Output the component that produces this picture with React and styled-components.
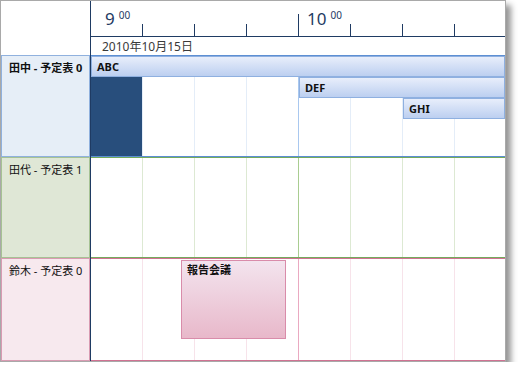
import React from 'react'
import styled, { createGlobalStyle } from 'styled-components'

const GlobalStyle = createGlobalStyle`
  body {
    margin: 0;
    background: #ffffff;
    font-family: "Noto Sans", "Noto Sans CJK JP", sans-serif;
  }
`

const NAVY = '#1f3b63'

const themes = {
  blue: { bg: '#e6eef7', cellBorder: '#90b1de', line: '#5d8fd3', grid: '#e4edf8', hour: '#a9c8ef' },
  green: { bg: '#dfe7d6', cellBorder: '#a6c294', line: '#74aa5c', grid: '#dde9d3', hour: '#a9cd91' },
  pink: { bg: '#f7e9ee', cellBorder: '#d99bb2', line: '#d07292', grid: '#f7e3ea', hour: '#eaa9c1' },
}

const Frame = styled.div`
  width: 506px;
  height: 362px;
  box-sizing: border-box;
  border: 1px solid #a9a9a9;
  background: #ffffff;
  display: flex;
  box-shadow: 5px 5px 6px rgba(0, 0, 0, 0.42);
  overflow: hidden;
`

const LeftCol = styled.div`
  width: 89px;
  flex: 0 0 89px;
  display: flex;
  flex-direction: column;
`

const Corner = styled.div`
  height: 54px;
  flex: 0 0 54px;
`

const LabelCell = styled.div`
  height: ${p => p.$h}px;
  flex: 0 0 ${p => p.$h}px;
  box-sizing: border-box;
  background: ${p => p.$t.bg};
  border: 1px solid ${p => p.$t.cellBorder};
  padding: 4px 7px;
  font-size: 11px;
  line-height: 15px;
  font-weight: ${p => (p.$bold ? 700 : 400)};
  color: #111;
  white-space: nowrap;
`

const RightCol = styled.div`
  flex: 1;
  min-width: 0;
  border-left: 1px solid ${NAVY};
  display: flex;
  flex-direction: column;
`

const Ruler = styled.div`
  height: 35px;
  flex: 0 0 35px;
  display: flex;
  border-bottom: 1px solid ${NAVY};
  overflow: hidden;
`

const TickSlot = styled.div`
  flex: 0 0 52px;
  display: flex;
  justify-content: space-between;
`

const HourLabel = styled.div`
  padding-left: ${p => p.$indent}px;
  padding-top: 8px;
  color: ${NAVY};
  font-size: 17px;
  line-height: 20px;
  white-space: nowrap;

  sup {
    font-size: 10px;
    vertical-align: top;
    position: relative;
    top: -4px;
    margin-left: 4px;
  }
`

const Tick = styled.div`
  align-self: flex-end;
  width: 1px;
  height: ${p => (p.$major ? 22 : 12)}px;
  background: ${NAVY};
`

const DateRow = styled.div`
  height: 18px;
  flex: 0 0 18px;
  padding-left: 11px;
  font-size: 12px;
  line-height: 19px;
  color: #3a3a3a;
`

const Lane = styled.div`
  position: relative;
  height: ${p => p.$h}px;
  flex: 0 0 ${p => p.$h}px;
  box-sizing: border-box;
  border-top: 1px solid ${p => p.$t.line};
  border-bottom: 1px solid ${p => p.$t.line};
  display: flex;
  overflow: hidden;
`

const Slot = styled.div`
  flex: 0 0 52px;
  box-sizing: border-box;
  border-right: 1px solid ${p => (p.$hour ? p.$t.hour : p.$t.grid)};
  background: ${p => (p.$selected ? '#284e7c' : 'transparent')};
`

const Appointment = styled.div`
  position: absolute;
  left: ${p => p.$left}px;
  top: ${p => p.$top}px;
  width: ${p => (p.$width ? `${p.$width}px` : 'auto')};
  right: ${p => (p.$width ? 'auto' : '0')};
  height: ${p => p.$height}px;
  box-sizing: border-box;
  padding: 0 5px;
  font-size: 11px;
  font-weight: 700;
  line-height: ${p => (p.$pink ? 18 : 19)}px;
  color: #111;
  border: 1px solid ${p => (p.$pink ? '#d98caa' : '#8fb0e0')};
  background: ${p =>
    p.$pink
      ? 'linear-gradient(#f3e4ee, #e8b8ca)'
      : 'linear-gradient(#e8eefb, #bccff0)'};
`

const rows = [
  { name: '田中 - 予定表 0', t: themes.blue, h: 102, bold: true, selected: 0 },
  { name: '田代 - 予定表 1', t: themes.green, h: 101 },
  { name: '鈴木 - 予定表 0', t: themes.pink, h: 103 },
]

const events = [
  [
    { title: 'ABC', left: 0, top: 0, height: 21 },
    { title: 'DEF', left: 208, top: 21, height: 21 },
    { title: 'GHI', left: 312, top: 42, height: 21 },
  ],
  [],
  [{ title: '報告会議', left: 90, top: 1, width: 105, height: 79, pink: true }],
]

const ticks = [
  { label: '9', indent: 14 },
  {},
  {},
  { major: true },
  { label: '10', indent: 8 },
  {},
  {},
  { major: true },
]

const App = () => {
  return (
    <>
      <GlobalStyle />
      <Frame>
        <LeftCol>
          <Corner />
          {rows.map(r => (
            <LabelCell key={r.name} $t={r.t} $h={r.h} $bold={r.bold}>
              {r.name}
            </LabelCell>
          ))}
        </LeftCol>
        <RightCol>
          <Ruler>
            {ticks.map((tk, i) => (
              <TickSlot key={i}>
                {tk.label ? (
                  <HourLabel $indent={tk.indent}>
                    {tk.label}
                    <sup>00</sup>
                  </HourLabel>
                ) : (
                  <span />
                )}
                <Tick $major={tk.major} />
              </TickSlot>
            ))}
          </Ruler>
          <DateRow>2010年10月15日</DateRow>
          {rows.map((r, ri) => (
            <Lane key={r.name} $t={r.t} $h={r.h}>
              {Array.from({ length: 8 }).map((_, i) => (
                <Slot key={i} $t={r.t} $hour={i === 3} $selected={r.selected === i} />
              ))}
              {events[ri].map(ev => (
                <Appointment
                  key={ev.title}
                  $left={ev.left}
                  $top={ev.top}
                  $width={ev.width}
                  $height={ev.height}
                  $pink={ev.pink}
                >
                  {ev.title}
                </Appointment>
              ))}
            </Lane>
          ))}
        </RightCol>
      </Frame>
    </>
  )
}

export default App
